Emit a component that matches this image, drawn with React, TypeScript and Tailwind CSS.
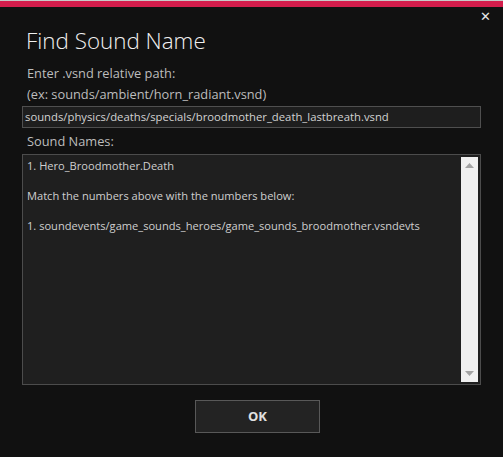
export default function App() {
  return (
    <div
      className="w-[503px] h-[457px] bg-[#111111] flex flex-col overflow-hidden"
      style={{ fontFamily: '"Open Sans", "Noto Sans", sans-serif' }}
    >
      {/* Window top accent */}
      <div className="h-px bg-[#c9c9c9]" />
      <div className="h-[6px] bg-[#d41d4c]" />

      {/* Close */}
      <div className="flex justify-end pr-[12px] pt-[3px] h-[16px]">
        <span className="text-[#e6e6e6] text-[13px] leading-none">✕</span>
      </div>

      <div className="px-[22px] flex flex-col">
        <h1 className="pl-[4px] mt-[4px] text-[22.4px] leading-[28px] font-light text-[#f0f0f0]">
          Find Sound Name
        </h1>

        <div className="pl-[5px] mt-[8px] text-[12.8px] leading-[21px] text-[#bdbdbd]">
          <p>Enter .vsnd relative path:</p>
          <p>(ex: sounds/ambient/horn_radiant.vsnd)</p>
        </div>

        <div className="mt-px h-[22px] w-[459px] bg-[#1e1e1e] border border-[#4f4f4f] flex items-center pl-[2px]">
          <span className="text-[11.3px] text-[#d2d2d2] whitespace-nowrap">
            sounds/physics/deaths/specials/broodmother_death_lastbreath.vsnd
          </span>
        </div>

        <p className="pl-[5px] mt-[2px] text-[12.8px] leading-[22px] text-[#bdbdbd]">Sound Names:</p>

        <div className="mt-[2px] h-[231px] w-[459px] bg-[#1f1f1f] border border-[#4c4c4c] flex">
          <div className="flex-1 pl-[4px] pt-[3px] text-[11.1px] leading-[15px] text-[#cfcfcf] whitespace-nowrap">
            <p>1. Hero_Broodmother.Death</p>
            <p>&nbsp;</p>
            <p>Match the numbers above with the numbers below:</p>
            <p>&nbsp;</p>
            <p>1. soundevents/game_sounds_heroes/game_sounds_broodmother.vsndevts</p>
          </div>
          <div className="w-[17px] my-[2px] mr-[2px] bg-[#f0f0f0] flex flex-col justify-between items-center py-[6px]">
            <svg width="9" height="5" viewBox="0 0 9 5">
              <path d="M0 5 L4.5 0 L9 5 Z" fill="#a3a3a3" />
            </svg>
            <svg width="9" height="5" viewBox="0 0 9 5">
              <path d="M0 0 L4.5 5 L9 0 Z" fill="#a3a3a3" />
            </svg>
          </div>
        </div>

        <div className="flex mt-[15px] pl-[173px]">
          <button className="w-[125px] h-[33px] bg-[#232323] border border-[#585858] text-[#e0e0e0] text-[13px] font-bold">
            OK
          </button>
        </div>
      </div>
    </div>
  )
}
